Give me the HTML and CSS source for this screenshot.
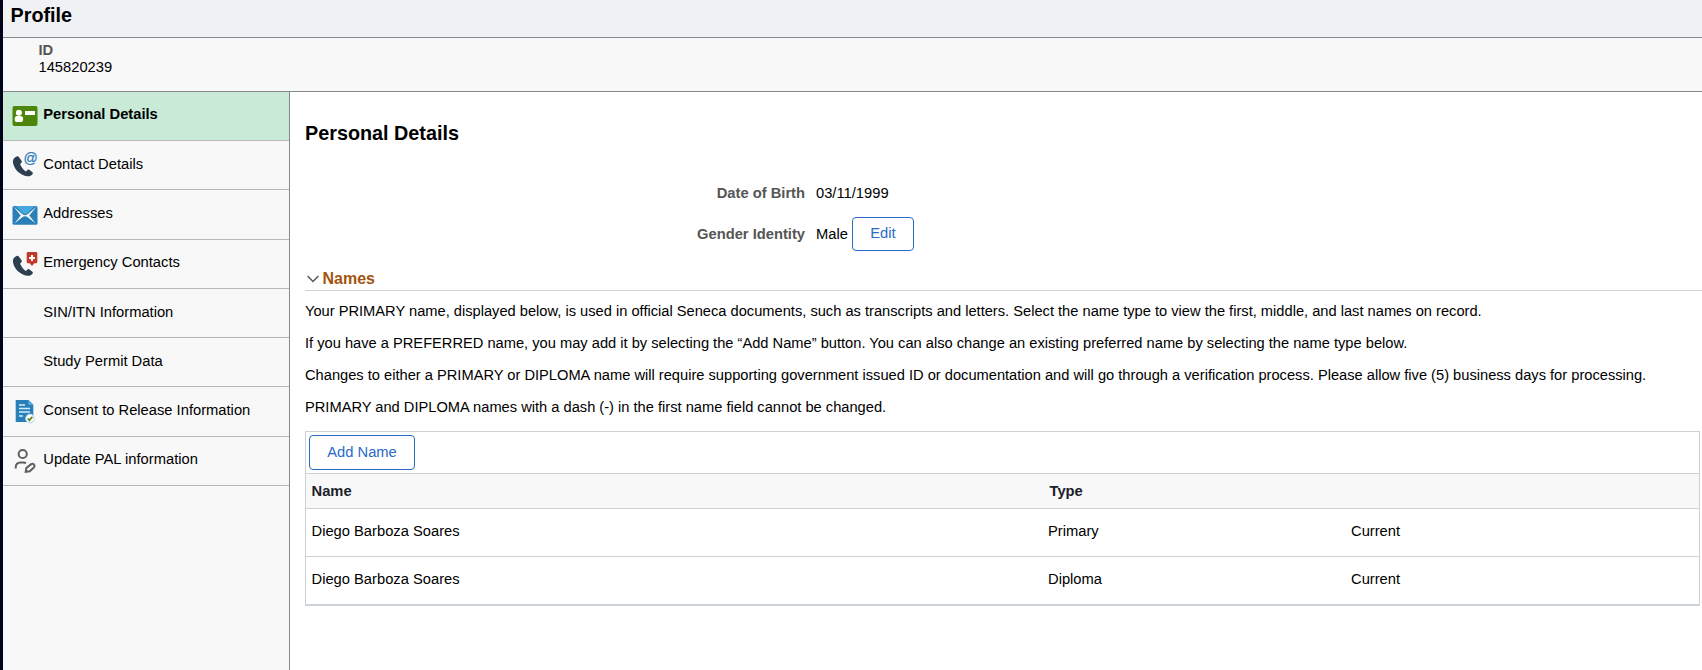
FILE: index.html
```html
<!DOCTYPE html>
<html lang="en">
<head>
<meta charset="utf-8">
<title>Profile</title>
<link rel="stylesheet" href="styles.css">
</head>
<body>
<div class="page">
  <header class="topbar"><h1>Profile</h1></header>
  <section class="idbar">
    <div class="id-label">ID</div>
    <div class="id-value">145820239</div>
  </section>
  <div class="body">
    <nav class="sidebar">
      <a class="item active">
        <svg class="icon" viewBox="-0.5 0 26 25"><rect y="2" width="25" height="20" rx="2" fill="#4d860a"/><circle cx="6.400" cy="8.700" r="3" fill="#fff"/><rect x="2.200" y="12" width="8.400" height="6" rx="2.600" fill="#fff"/><rect x="12.500" y="7" width="10" height="4" fill="#fff"/></svg>
        <span>Personal Details</span></a>
      <a class="item low">
        <svg class="icon" viewBox="-0.5 0 26 25"><path d="M4.200 3.500C1.500 4.300 0 6.800.5 9.800c1 6 6.500 12.500 14.500 13.500 2.500.2 4.500-1 5.300-2.600.2-.6 0-1-.4-1.400l-3.200-2.500c-.6-.4-1.200-.3-1.700.2l-1.600 1.600C11.300 17 8.700 14 7.600 11.200L9 9.600c.5-.5.5-1 .2-1.600L6.300 4c-.5-.6-1.200-.8-2.100-.5z" fill="#2c3e50"/><text class="at" x="10.900" y="10.300">@</text></svg>
        <span>Contact Details</span></a>
      <a class="item low tall">
        <svg class="icon" viewBox="-0.5 0 26 25"><rect y="4" width="25" height="18.700" rx="1.500" fill="#2980b9"/><path d="M1 4.500 9 11.500q3.500 3.500 7 0l8-7-7.200 9L23 21.500l-8-6.500q-2.500-1.500-5 0L2 21.500l6.200-8z" fill="#f8f8f8"/><path d="M3 4h19l-6.500 6.600q-3 2.600-6 0z" fill="#45a9e0"/></svg>
        <span>Addresses</span></a>
      <a class="item">
        <svg class="icon" viewBox="-0.5 0 26 25"><path d="M4.200 4C1.500 4.800 0 7.300.5 10.300c1 6 6.500 12.500 14.500 13.500 2.500.2 4.500-1 5.300-2.600.2-.6 0-1-.4-1.400l-3.200-2.500c-.6-.4-1.200-.3-1.700.2l-1.600 1.600C11.300 17.500 8.700 14.500 7.600 11.700L9 10.100c.5-.5.5-1 .2-1.600L6.300 4.500c-.5-.6-1.200-.8-2.100-.5z" fill="#2c3e50"/><path d="M15.500 0h8q1.300 0 1.300 1.300V10q0 1.300-1.300 1.300h-1.700L19.500 14l-2.300-2.700h-1.700q-1.300 0-1.300-1.300V1.300Q14.200 0 15.500 0z" fill="#c0392b"/><path d="M19.500 3v6M16.500 6h6" stroke="#fff" stroke-width="2"/></svg>
        <span>Emergency Contacts</span></a>
      <a class="item low"><span class="icon"></span><span>SIN/ITN Information</span></a>
      <a class="item low"><span class="icon"></span><span>Study Permit Data</span></a>
      <a class="item low tall">
        <svg class="icon" viewBox="-0.5 0 26 25"><path d="M3.200 1H16l4.800 4.800V23H3.200z" fill="#2980b9"/><path d="M16 1v4.800h4.800z" fill="#5dade2"/><path d="M6.500 6h6M6.500 9.500h11M6.500 13h11M6.500 17h4" stroke="#d5eaf7" stroke-width="1.500"/><circle cx="17.500" cy="19.500" r="4.400" fill="#fff" stroke="#a5cde8" stroke-width=".8"/><path d="m15.300 19.500 1.600 1.800 3-3.600" fill="none" stroke="#4d860a" stroke-width="1.700"/></svg>
        <span>Consent to Release Information</span></a>
      <a class="item">
        <svg class="icon" viewBox="-0.5 0 26 25" fill="none" stroke="#5f5f5f" stroke-width="2"><circle cx="10.200" cy="5" r="4.100"/><path d="M3.200 19.500v-1c0-3 2-5 5-5h2.500c1.200 0 2 .2 2.800.7M13.200 22.800l.6-3.800 4.900-3.900q1.400-.9 2.700.4t.2 2.700l-4.400 4z"/></svg>
        <span>Update PAL information</span></a>
    </nav>
    <main class="main">
      <h2>Personal Details</h2>
      <dl class="facts">
        <dt>Date of Birth</dt><dd>03/11/1999</dd>
        <dt>Gender Identity</dt><dd>Male <button class="btn edit">Edit</button></dd>
      </dl>
      <h3 class="section"><svg class="chev" viewBox="0 0 12 8"><path d="m.6 1 5.400 5.600L11.400 1" fill="none" stroke="#555" stroke-width="1.400"/></svg>Names</h3>
      <div class="copy">
        <p>Your PRIMARY name, displayed below, is used in official Seneca documents, such as transcripts and letters. Select the name type to view the first, middle, and last names on record.</p>
        <p>If you have a PREFERRED name, you may add it by selecting the “Add Name” button. You can also change an existing preferred name by selecting the name type below.</p>
        <p>Changes to either a PRIMARY or DIPLOMA name will require supporting government issued ID or documentation and will go through a verification process. Please allow five (5) business days for processing.</p>
        <p>PRIMARY and DIPLOMA names with a dash (-) in the first name field cannot be changed.</p>
      </div>
      <div class="grid">
        <div class="tools"><button class="btn add">Add Name</button></div>
        <div class="row head"><span>Name</span><span>Type</span><span></span></div>
        <div class="row"><span>Diego Barboza Soares</span><span>Primary</span><span>Current</span></div>
        <div class="row"><span>Diego Barboza Soares</span><span>Diploma</span><span>Current</span></div>
      </div>
    </main>
  </div>
</div>
</body>
</html>
```
FILE: styles.css
```css
* { box-sizing: border-box; }
body {
  margin: 0;
  font: 14.72px/17px "Liberation Sans", Arial, sans-serif;
  color: #000;
  background: #fff;
}
h1, h2, h3, p, dl, dd { margin: 0; }
.page {
  height: 670px;
  border-left: 3px solid #00041a;
  display: flex;
  flex-direction: column;
  overflow: hidden;
}
.topbar {
  height: 38px;
  background: #eff1f5;
  border-bottom: 1px solid #84898e;
  padding: 4px 0 0 7.5px;
}
h1 { font-size: 19.8px; line-height: 23px; }
.idbar {
  height: 54px;
  background: #f8f8f8;
  border-bottom: 1px solid #84898e;
  padding: 4px 0 0 35.5px;
}
.id-label { font-weight: bold; color: #555; }
.body { flex: 1; display: flex; min-height: 0; }
.sidebar {
  width: 287px;
  background: #f8f8f8;
  border-right: 1px solid #84898e;
}
.item {
  display: flex;
  height: 49px;
  padding: 14px 0 0 9px;
  border-bottom: 1px solid #b5b7b9;
  gap: 5.25px;
}
.item.active { background: #c8ead7; font-weight: bold; }
.item.low { padding-top: 15px; }
.item.tall { height: 50px; }
.icon { width: 26px; height: 25px; flex: none; margin-top: -2px; overflow: visible; }
.low .icon { margin-top: -3px; }
.at { font-size: 14px; fill: #2f80b9; stroke: #2f80b9; stroke-width: .25px; }
.main { flex: 1; padding: 30px 0 0 15px; min-width: 0; }
h2 { font-size: 19.8px; line-height: 23px; }
.facts {
  display: grid;
  grid-template-columns: 500px 1fr;
  grid-template-rows: 32px 34px;
  column-gap: 11px;
  padding-top: 40px;
}
.facts dt { text-align: right; font-weight: bold; color: #555; }
.facts dt:nth-of-type(2), .facts dd:nth-of-type(2) { line-height: 34px; }
.facts dd:nth-of-type(2) { display: flex; gap: 4px; }
.btn {
  font: inherit;
  line-height: 17px;
  color: #2a6bc6;
  background: #fff;
  border: 1px solid #2a6bc6;
  border-radius: 4px;
  padding: 0;
}
.edit { width: 62px; height: 34px; padding-bottom: 2px; }
.section {
  display: flex;
  align-items: center;
  gap: 3.5px;
  height: 40px;
  padding: 16px 0 0 2px;
  border-bottom: 1px solid #cdd1d8;
  font-size: 16px;
  color: #a3540e;
}
.chev { width: 12px; height: 8px; }
.copy { padding-top: 12px; white-space: nowrap; font-size: 14.668px; }
.copy p { margin-bottom: 15px; }
.grid {
  width: 1395px;
  border: 1px solid #cdd1d8;
  border-bottom-width: 2px;
}
.tools { height: 41px; padding: 3px; }
.add { width: 106px; height: 35px; padding-bottom: 1px; }
.row {
  display: grid;
  grid-template-columns: 736.5px 303px 1fr;
  height: 48px;
  align-items: center;
  border-top: 1px solid #cdd1d8;
  padding: 0 0 3px 5.5px;
}
.row.head {
  grid-template-columns: 738px 301.5px 1fr;
  height: 35px;
  padding-bottom: 0;
  background: #f8f8f8;
  font-weight: bold;
  color: #1b2129;
}
```
